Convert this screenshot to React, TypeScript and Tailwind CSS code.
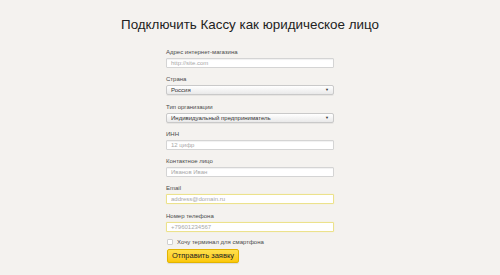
import React from "react";

const font = { fontFamily: '"Liberation Sans", Arial, sans-serif' };

function Label({ children }: { children: React.ReactNode }) {
  return <div className="text-[6px] leading-[8px] h-[8px] text-[#4a4a4a] whitespace-nowrap">{children}</div>;
}

function Input({ placeholder, yellow }: { placeholder: string; yellow?: boolean }) {
  return (
    <div
      className={
        "mt-[2px] h-[10px] w-full bg-white border rounded-[1px] flex items-center px-[4px] text-[6px] leading-[8px] text-[#a8a8a8] whitespace-nowrap " +
        (yellow
          ? "border-[#ece28c] shadow-[0_0_1px_#f3ea9a]"
          : "border-[#d4d4d4] shadow-[inset_0_1px_1px_rgba(0,0,0,0.06)]")
      }
    >
      {placeholder}
    </div>
  );
}

function Select({ value }: { value: string }) {
  return (
    <div className="mt-[2px] h-[10px] w-full bg-gradient-to-b from-[#ffffff] to-[#e9e9e9] border border-[#c9c9c9] rounded-[2px] flex items-center justify-between pl-[4px] pr-[4px] text-[6px] leading-[8px] text-[#333] whitespace-nowrap shadow-[0_1px_0_rgba(0,0,0,0.05)]">
      <span>{value}</span>
      <span className="text-[4px] leading-[4px] text-[#333]">▼</span>
    </div>
  );
}

export default function App() {
  return (
    <div className="w-[500px] h-[275px] bg-[#f4f2ef] overflow-hidden" style={font}>
      <div className="pt-[17px] text-center text-[13.4px] leading-[16px] text-[#222]">
        Подключить Кассу как юридическое лицо
      </div>
      <div className="mx-auto w-[168px] mt-[15px] flex flex-col gap-[7.3px]">
        <div>
          <Label>Адрес интернет-магазина</Label>
          <Input placeholder="http://site.com" />
        </div>
        <div>
          <Label>Страна</Label>
          <Select value="Россия" />
        </div>
        <div>
          <Label>Тип организации</Label>
          <Select value="Индивидуальный предприниматель" />
        </div>
        <div>
          <Label>ИНН</Label>
          <Input placeholder="12 цифр" />
        </div>
        <div>
          <Label>Контактное лицо</Label>
          <Input placeholder="Иванов Иван" />
        </div>
        <div>
          <Label>Email</Label>
          <Input placeholder="address@domain.ru" yellow />
        </div>
        <div>
          <Label>Номер телефона</Label>
          <Input placeholder="+79601234567" yellow />
        </div>
      </div>
      <div className="mx-auto w-[168px] mt-[6px] flex items-center h-[8px]">
        <div className="w-[6px] h-[6px] ml-[1px] bg-white border border-[#cfcfcf] rounded-[1px]" />
        <span className="ml-[4px] text-[6px] leading-[8px] text-[#4a4a4a] whitespace-nowrap">Хочу терминал для смартфона</span>
      </div>
      <div className="mx-auto w-[168px] mt-[3px]">
        <div className="ml-[1px] w-[72px] h-[14px] rounded-[2px] border border-[#e2b400] bg-gradient-to-b from-[#ffe04a] to-[#fcc800] flex items-center justify-center text-[7.5px] leading-[10px] text-[#222] whitespace-nowrap shadow-[0_1px_1px_rgba(0,0,0,0.1)]">
          Отправить заявку
        </div>
      </div>
    </div>
  );
}
